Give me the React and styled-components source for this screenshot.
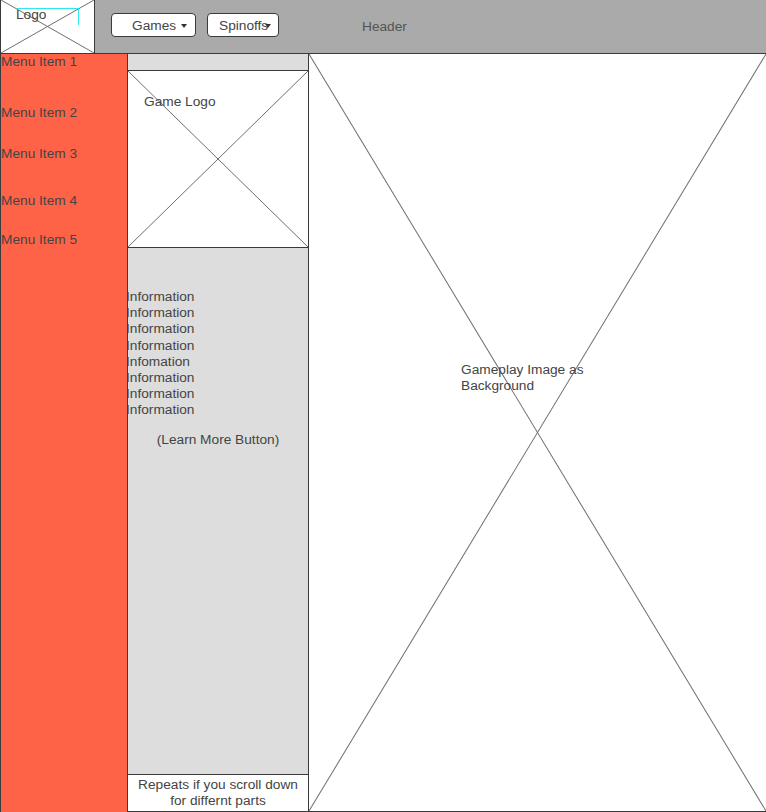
import React from 'react';
import styled, { createGlobalStyle } from 'styled-components';

const menuItems = [
    { label: 'Menu Item 1', top: 0 },
    { label: 'Menu Item 2', top: 35 },
    { label: 'Menu Item 3', top: 25 },
    { label: 'Menu Item 4', top: 31 },
    { label: 'Menu Item 5', top: 23 },
];

const infoLines = [
    'Information',
    'Information',
    'Information',
    'Information',
    'Infomation',
    'Information',
    'Information',
    'Information',
];

function Cross() {
    return (
        <CrossSvg viewBox="0 0 100 100" preserveAspectRatio="none">
            <line x1="0" y1="0" x2="100" y2="100" vectorEffect="non-scaling-stroke" />
            <line x1="100" y1="0" x2="0" y2="100" vectorEffect="non-scaling-stroke" />
        </CrossSvg>
    );
}

function App() {
    return (
        <>
        <GlobalStyle />
        <Page>
            <Header>
                <LogoBox>
                    <Cross />
                    <LogoText>Logo</LogoText>
                    <SelectionMark />
                </LogoBox>
                <DropButton $width={85} $pad={20}>
                    Games
                    <Caret $right={8} />
                </DropButton>
                <DropButton $width={72} $pad={11} $gap={11}>
                    Spinoffs
                    <Caret $right={7} />
                </DropButton>
                <HeaderTitle>Header</HeaderTitle>
            </Header>

            <Body>
                <Sidebar>
                    {menuItems.map((item) => (
                        <MenuItem key={item.label} $top={item.top}>{item.label}</MenuItem>
                    ))}
                </Sidebar>

                <Middle>
                    <GameLogo>
                        <Cross />
                        <GameLogoText>Game Logo</GameLogoText>
                    </GameLogo>
                    <InfoList>
                        {infoLines.map((line, i) => (
                            <InfoLine key={i}>{line}</InfoLine>
                        ))}
                    </InfoList>
                    <LearnMore>(Learn More Button)</LearnMore>
                    <RepeatNote>
                        Repeats if you scroll down
                        <br />
                        for differnt parts
                    </RepeatNote>
                </Middle>

                <Showcase>
                    <Cross />
                    <ShowcaseText>Gameplay Image as Background</ShowcaseText>
                </Showcase>
            </Body>
        </Page>
        </>
    );
}

export default App;



// styled-components
const GlobalStyle = createGlobalStyle`
    html, body {
        margin: 0;
        padding: 0;
        background: #ffffff;
    }
    body {
        font-family: "Liberation Sans", Arial, sans-serif;
        font-size: 13.7px;
        color: #444444;
    }
`;

const Page = styled.div`
    width: 766px;
    height: 812px;
    display: flex;
    flex-direction: column;
    overflow: hidden;
`;

const CrossSvg = styled.svg`
    position: absolute;
    inset: 0;
    width: 100%;
    height: 100%;
    stroke: #6e6e6e;
    stroke-width: 1;
    pointer-events: none;
`;

const Header = styled.header`
    height: 54px;
    box-sizing: border-box;
    display: flex;
    align-items: center;
    background-color: #aaaaaa;
    border-bottom: 1px solid #3a3a3a;
`;

const LogoBox = styled.div`
    position: relative;
    align-self: stretch;
    width: 95px;
    box-sizing: border-box;
    background: #ffffff;
    border-left: 1px solid #3a3a3a;
    border-right: 1px solid #3a3a3a;
    padding: 7px 0 0 15px;
`;

const LogoText = styled.span`
    position: relative;
`;

const SelectionMark = styled.span`
    position: absolute;
    left: 16px;
    top: 8px;
    width: 61px;
    height: 16px;
    border-top: 1px solid #33e6f0;
    border-right: 1px solid #33e6f0;
`;

const DropButton = styled.div`
    position: relative;
    width: ${(p) => p.$width}px;
    height: 24px;
    box-sizing: border-box;
    margin-left: ${(p) => p.$gap || 16}px;
    margin-top: -3px;
    padding-left: ${(p) => p.$pad}px;
    display: flex;
    align-items: center;
    background: #ffffff;
    border: 1px solid #3a3a3a;
    border-radius: 4px;
`;

const Caret = styled.span`
    position: absolute;
    right: ${(p) => p.$right}px;
    top: 10px;
    width: 0;
    height: 0;
    border-left: 3px solid transparent;
    border-right: 3px solid transparent;
    border-top: 4px solid #333333;
`;

const HeaderTitle = styled.span`
    margin-left: 83px;
    color: #555555;
`;

const Body = styled.div`
    flex: 1;
    display: flex;
    min-height: 0;
`;

const Sidebar = styled.nav`
    position: relative;
    z-index: 1;
    width: 128px;
    box-sizing: border-box;
    display: flex;
    flex-direction: column;
    background-color: #ff6347;
    border-left: 1px solid #3a3a3a;
    border-right: 1px solid #3a3a3a;
`;

const MenuItem = styled.div`
    line-height: 16px;
    margin-top: ${(p) => p.$top}px;
    white-space: nowrap;
`;

const Middle = styled.section`
    width: 181px;
    box-sizing: border-box;
    display: flex;
    flex-direction: column;
    background-color: #dddddd;
    border-right: 1px solid #3a3a3a;
    border-bottom: 1px solid #3a3a3a;
    padding-top: 16px;
`;

const GameLogo = styled.div`
    position: relative;
    height: 178px;
    box-sizing: border-box;
    margin-left: -1px;
    background: #ffffff;
    border: 1px solid #3a3a3a;
    border-right: none;
    padding: 23px 0 0 16px;
`;

const GameLogoText = styled.span`
    position: relative;
`;

const InfoList = styled.div`
    margin-top: 41px;
    margin-left: -2px;
    display: flex;
    flex-direction: column;
`;

const InfoLine = styled.div`
    line-height: 16.2px;
    white-space: nowrap;
`;

const LearnMore = styled.div`
    margin-top: 13px;
    text-align: center;
    line-height: 16px;
`;

const RepeatNote = styled.div`
    margin-top: auto;
    height: 37px;
    box-sizing: border-box;
    padding-top: 2px;
    background: #ffffff;
    border-top: 1px solid #3a3a3a;
    text-align: center;
    line-height: 16px;
`;

const Showcase = styled.section`
    position: relative;
    flex: 1;
    box-sizing: border-box;
    background: #ffffff;
    border-bottom: 1px solid #3a3a3a;
    padding: 308px 0 0 152px;
`;

const ShowcaseText = styled.div`
    position: relative;
    width: 135px;
    line-height: 16px;
`;
